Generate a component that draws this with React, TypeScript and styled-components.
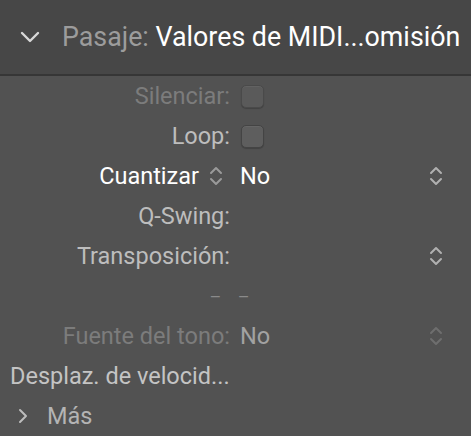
import { FC } from 'react';
import styled, { createGlobalStyle } from 'styled-components';

// ========== グローバル ==========

const GlobalStyle = createGlobalStyle`
  html, body {
    margin: 0;
    padding: 0;
    background: #525252;
  }
  body {
    font-family: Roboto, "Liberation Sans", sans-serif;
    -webkit-font-smoothing: antialiased;
  }
`;

// ========== アイコン ==========

const ChevronDown: FC = () => (
  <svg width="20" height="12" viewBox="0 0 20 12">
    <path d="M2 2 L10 10 L18 2" fill="none" stroke="#d8d8d8" strokeWidth="2.4" strokeLinecap="round" strokeLinejoin="round" />
  </svg>
);

const ChevronRight: FC = () => (
  <svg width="10" height="16" viewBox="0 0 10 16">
    <path d="M2 2 L8 8 L2 14" fill="none" stroke="#bdbdbd" strokeWidth="2" strokeLinecap="round" strokeLinejoin="round" />
  </svg>
);

const Stepper: FC<{ color?: string }> = ({ color = '#b0b0b0' }) => (
  <svg width="14" height="22" viewBox="0 0 14 22">
    <path d="M2 8 L7 3 L12 8" fill="none" stroke={color} strokeWidth="2" strokeLinecap="round" strokeLinejoin="round" />
    <path d="M2 14 L7 19 L12 14" fill="none" stroke={color} strokeWidth="2" strokeLinecap="round" strokeLinejoin="round" />
  </svg>
);

// ========== データ ==========

type Tone = 'dim' | 'normal' | 'bright' | 'muted';

type RowDef = {
  label: string;
  tone: Tone;
  labelStepper?: boolean;
  checkbox?: boolean;
  value?: string;
  valueTone?: Tone;
  stepper?: string;
};

const rows: RowDef[] = [
  { label: 'Silenciar:', tone: 'dim', checkbox: true },
  { label: 'Loop:', tone: 'normal', checkbox: true },
  { label: 'Cuantizar', tone: 'bright', labelStepper: true, value: 'No', valueTone: 'bright', stepper: '#b0b0b0' },
  { label: 'Q-Swing:', tone: 'normal' },
  { label: 'Transposición:', tone: 'normal', stepper: '#b0b0b0' },
];

const toneColor: Record<Tone, string> = {
  dim: '#7c7c7c',
  muted: '#a2a2a2',
  normal: '#bdbdbd',
  bright: '#ffffff',
};

// ========== コンポーネント ==========

export default function App() {
  return (
    <>
      <GlobalStyle />
      <Panel>
        <Header>
          <ChevronDown />
          <HeaderTitle>
            <span className="prefix">Pasaje: </span>
            Valores de MIDI...omisión
          </HeaderTitle>
        </Header>

        {rows.map((r) => (
          <Row key={r.label}>
            <Label $tone={r.tone}>
              {r.label}
              {r.labelStepper && <Stepper color="#9a9a9a" />}
            </Label>
            <Value $tone={r.valueTone ?? 'normal'}>
              {r.checkbox && <Checkbox $dim={r.tone === 'dim'} />}
              {r.value}
            </Value>
            <StepperSlot>{r.stepper && <Stepper color={r.stepper} />}</StepperSlot>
          </Row>
        ))}

        <Row>
          <Dashes>– –</Dashes>
        </Row>

        <Row>
          <Label $tone="dim">Fuente del tono:</Label>
          <Value $tone="muted">No</Value>
          <StepperSlot>
            <Stepper color="#6e6e6e" />
          </StepperSlot>
        </Row>

        <PlainRow>
          <PlainText>Desplaz. de velocid...</PlainText>
        </PlainRow>

        <PlainRow>
          <MoreToggle>
            <ChevronRight />
            <span>Más</span>
          </MoreToggle>
        </PlainRow>
      </Panel>
    </>
  );
}

// ========== スタイル ==========

const Panel = styled.div`
  width: 471px;
  height: 436px;
  display: flex;
  flex-direction: column;
  background: #525252;
  overflow: hidden;
`;

const Header = styled.header`
  height: 74px;
  display: flex;
  align-items: center;
  gap: 22px;
  padding-left: 20px;
  background: #474747;
  border-bottom: 2px solid #363636;
  flex-shrink: 0;
`;

const HeaderTitle = styled.h1`
  margin: 0;
  font-size: 26.8px;
  font-weight: 400;
  color: #ffffff;
  white-space: nowrap;

  .prefix {
    color: #9c9c9c;
  }
`;

const Row = styled.div`
  height: 40px;
  display: grid;
  grid-template-columns: 230px 1fr 60px;
  align-items: center;
  column-gap: 10px;
  flex-shrink: 0;
`;

const Label = styled.div<{ $tone: Tone }>`
  display: flex;
  align-items: center;
  justify-content: flex-end;
  gap: 10px;
  font-size: 23.5px;
  color: ${(p) => toneColor[p.$tone]};
  white-space: nowrap;

  svg {
    margin-right: 7px;
  }
`;

const Value = styled.div<{ $tone: Tone }>`
  display: flex;
  align-items: center;
  font-size: 23.5px;
  color: ${(p) => toneColor[p.$tone]};
`;

const Checkbox = styled.span<{ $dim?: boolean }>`
  display: inline-block;
  width: 23px;
  height: 23px;
  margin-left: 1px;
  border-radius: 5px;
  background: ${(p) => (p.$dim ? '#5a5a5a' : '#5e5e5e')};
  border: 1px solid ${(p) => (p.$dim ? '#4a4a4a' : '#444')};
  box-shadow: inset 0 1px 0 rgba(255, 255, 255, 0.05), 0 1px 1px rgba(0, 0, 0, 0.2);
  box-sizing: border-box;
`;

const StepperSlot = styled.div`
  display: flex;
  justify-content: flex-end;
  padding-right: 28px;
`;

const Dashes = styled.div`
  grid-column: 1 / -1;
  text-align: center;
  padding-right: 6px;
  font-size: 18px;
  color: #8a8a8a;
  letter-spacing: 6px;
`;

const PlainRow = styled.div`
  height: 40px;
  display: flex;
  align-items: center;
  flex-shrink: 0;
`;

const PlainText = styled.div`
  padding-left: 10px;
  font-size: 23.5px;
  color: #c4c4c4;
`;

const MoreToggle = styled.div`
  display: flex;
  align-items: center;
  gap: 19px;
  padding-left: 18px;
  font-size: 23.5px;
  color: #b4b4b4;
`;
